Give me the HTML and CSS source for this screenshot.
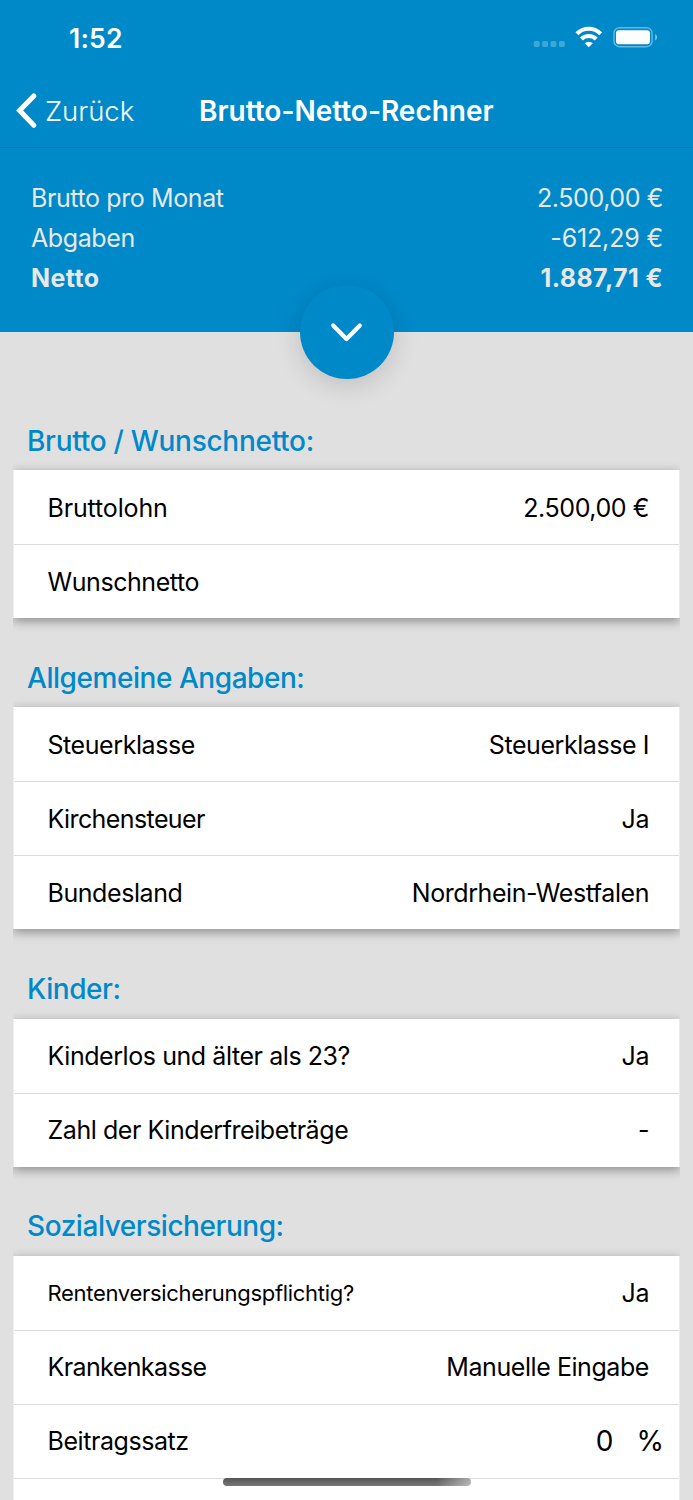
FILE: index.html
```html
<!DOCTYPE html>
<html lang="de">
<head>
    <meta charset="UTF-8">
    <meta name="viewport" content="width=device-width, initial-scale=1.0">
    <title>Brutto-Netto-Rechner</title>
    <link rel="stylesheet" href="styles.css">
</head>
<body>

    <header class="header">
        <div class="status-bar">
            <span class="time">1:52</span>
            <svg class="status-icons" width="126" height="26" viewBox="0 0 126 26">
                <!-- Signal -->
                <g fill="#fff" opacity="0.25">
                    <rect x="3.8" y="16" width="5.8" height="6" rx="1.5"/>
                    <rect x="12.2" y="16" width="5.8" height="6" rx="1.5"/>
                    <rect x="20.6" y="16" width="5.8" height="6" rx="1.5"/>
                    <rect x="29" y="16" width="5.8" height="6" rx="1.5"/>
                </g>
                <!-- Wifi -->
                <g fill="none" stroke="#fff" stroke-width="4.1">
                    <path d="M46.9 8.8a16.7 16.7 0 0 1 23.8 0"/>
                    <path d="M51.4 14a10.5 10.5 0 0 1 14.8 0"/>
                </g>
                <path d="M58.8 22.2l-4-4a5.9 5.9 0 0 1 8 0z" fill="#fff"/>
                <!-- Battery -->
                <rect x="84" y="2.7" width="38" height="19" rx="5.5" fill="none" stroke="#fff" stroke-width="1.4" opacity="0.4"/>
                <rect x="86" y="5.2" width="34" height="14" rx="3" fill="#fff"/>
                <path d="M125.2 9v6.4c1.1-.6 1.8-1.8 1.8-3.2s-.7-2.6-1.8-3.2z" fill="#fff" opacity="0.5"/>
            </svg>
        </div>

        <nav class="nav-bar">
            <a class="back">
                <svg width="22" height="36" viewBox="0 0 22 36">
                    <path d="M18.8 3L4.6 17.6L18.8 32.2" fill="none" stroke="#fff" stroke-width="5" stroke-linecap="round" stroke-linejoin="miter"/>
                </svg>
                <span>Zurück</span>
            </a>
            <h1 class="title">Brutto-Netto-Rechner</h1>
        </nav>

        <div class="summary">
            <div class="summary-row"><span>Brutto pro Monat</span><span>2.500,00 €</span></div>
            <div class="summary-row"><span>Abgaben</span><span class="wide">-612,29 €</span></div>
            <div class="summary-row total"><span>Netto</span><span>1.887,71 €</span></div>
        </div>

        <button class="expand-btn" aria-label="Details">
            <svg width="34" height="22" viewBox="0 0 34 22">
                <path d="M3.2 4.5L16.5 18L29.8 4.5" fill="none" stroke="#fff" stroke-width="4.2" stroke-linecap="round" stroke-linejoin="round"/>
            </svg>
        </button>
    </header>

    <main>
        <h2 class="wide">Brutto / Wunschnetto:</h2>
        <div class="card">
            <div class="row"><span class="wide">Bruttolohn</span><span class="value">2.500,00 €</span></div>
            <div class="row"><span>Wunschnetto</span></div>
        </div>

        <h2>Allgemeine Angaben:</h2>
        <div class="card">
            <div class="row"><span>Steuerklasse</span><span class="value">Steuerklasse I</span></div>
            <div class="row"><span class="narrow">Kirchensteuer</span><span class="value">Ja</span></div>
            <div class="row"><span>Bundesland</span><span class="value">Nordrhein-Westfalen</span></div>
        </div>

        <h2>Kinder:</h2>
        <div class="card">
            <div class="row"><span>Kinderlos und älter als 23?</span><span class="value">Ja</span></div>
            <div class="row"><span>Zahl der Kinderfreibeträge</span><span class="value">-</span></div>
        </div>

        <h2>Sozialversicherung:</h2>
        <div class="card">
            <div class="row"><span class="small">Rentenversicherungspflichtig?</span><span class="value">Ja</span></div>
            <div class="row"><span class="narrow">Krankenkasse</span><span class="value">Manuelle Eingabe</span></div>
            <div class="row percent"><span>Beitragssatz</span><span class="value">0<span class="unit">%</span></span></div>
            <div class="row"></div>
        </div>
    </main>

    <div class="home-indicator"></div>

</body>
</html>
```
FILE: styles.css
```css
* {
    box-sizing: border-box;
}

body {
    margin: 0;
    height: 1500px;
    overflow: hidden;
    background-color: #e0e0e0;
    font-family: Inter, "Liberation Sans", sans-serif;
    font-size: 25px;
    color: #000;
}

/* Blue header */
.header {
    position: relative;
    height: 331.5px;
    background: #0089c9;
    color: #fff;
}

.status-bar {
    display: flex;
    justify-content: space-between;
    align-items: center;
    height: 74px;
    padding: 2px 37px 0 69px;
}

.status-icons {
    overflow: visible;
}

.time {
    font-size: 26.5px;
    font-weight: 600;
    letter-spacing: 0.2px;
}

.nav-bar {
    display: grid;
    grid-template-columns: 199px 1fr;
    align-items: center;
    height: 74px;
    padding-left: 15px;
    border-bottom: 1px solid #007eba;
}

.back {
    display: flex;
    align-items: center;
    gap: 8px;
    font-size: 27.5px;
    font-weight: 350;
}

.title {
    margin: 0 0 0 -15px;
    font-size: 28px;
    font-weight: 600;
}

.summary {
    padding: 30px 30px 0 31px;
    font-weight: 370;
    letter-spacing: -0.4px;
    color: #e8e8e8;
}

.summary-row {
    display: flex;
    justify-content: space-between;
    line-height: 40px;
}

.summary-row .wide {
    letter-spacing: -0.15px;
}

.total {
    font-weight: 700;
    letter-spacing: 0.4px;
}

.expand-btn {
    position: absolute;
    left: 50%;
    bottom: -47px;
    display: flex;
    align-items: center;
    justify-content: center;
    width: 94px;
    height: 94px;
    margin-left: -47px;
    padding: 0;
    border: none;
    border-radius: 50%;
    background: #0089c9;
    box-shadow: 0 6px 26px rgba(0, 0, 0, 0.15);
}

/* Form sections */
main {
    padding: 49.5px 13px 0;
}

h2 {
    margin: 0;
    padding: 39.5px 14px 9.7px;
    font-size: 28px;
    font-weight: 450;
    line-height: 40px;
    letter-spacing: -0.45px;
    color: #0089c9;
}

h2.wide {
    letter-spacing: -0.28px;
}

.card {
    background: #fff;
    border: solid #ededed;
    border-width: 0 1px;
    box-shadow: 0 3px 10px rgba(0, 0, 0, 0.38);
    clip-path: inset(-20px 0 -20px 0); /* no shadow on the sides */
}

.row {
    display: flex;
    justify-content: space-between;
    align-items: center;
    height: 74px;
    padding: 1px 30px 0 33.5px;
    letter-spacing: -0.43px;
}

.row + .row {
    border-top: 1px solid #dcdcdc;
    padding-top: 0;
}

.row .wide {
    letter-spacing: -0.15px;
}

.narrow {
    letter-spacing: -0.6px;
}

.small {
    font-size: 22px;
    letter-spacing: -0.3px;
}

.percent {
    padding-right: 15.5px;
}

.percent .value {
    font-size: 28px;
}

.unit {
    margin-left: 23.5px;
}

.home-indicator {
    position: fixed;
    left: 222.5px;
    top: 1478px;
    width: 248px;
    height: 8px;
    border-radius: 4px;
    background: linear-gradient(to right, transparent 86%, rgba(255, 255, 255, 0.5)), linear-gradient(#555, #777);
}
```
